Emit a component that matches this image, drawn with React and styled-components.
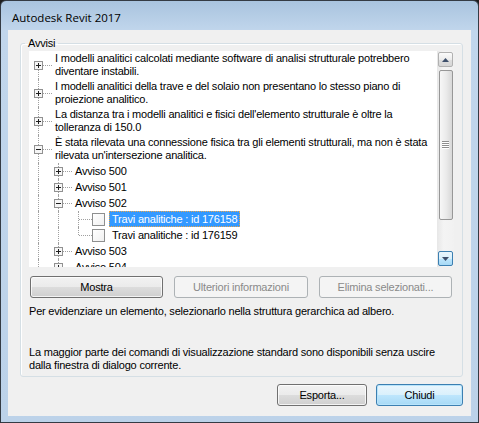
import styled, { createGlobalStyle } from "styled-components";

const GlobalStyle = createGlobalStyle`
  html, body {
    margin: 0;
    padding: 0;
    background: #1e1e1e;
  }
  body {
    font-family: "Liberation Sans", Arial, sans-serif;
    font-size: 11px;
    letter-spacing: -0.2px;
    color: #000;
  }
`;

const items = [
    { level: 0, lines: ["I modelli analitici calcolati mediante software di analisi strutturale potrebbero", "diventare instabili."], state: "closed", first: true, more: true, guides: [] },
    { level: 0, lines: ["I modelli analitici della trave e del solaio non presentano lo stesso piano di", "proiezione analitico."], state: "closed", more: true, guides: [] },
    { level: 0, lines: ["La distanza tra i modelli analitici e fisici dell'elemento strutturale è oltre la", "tolleranza di 150.0"], state: "closed", more: true, guides: [] },
    { level: 0, lines: ["È stata rilevata una connessione fisica tra gli elementi strutturali, ma non è stata", "rilevata un'intersezione analitica."], state: "open", more: true, guides: [] },
    { level: 1, lines: ["Avviso 500"], state: "closed", more: true, guides: [true] },
    { level: 1, lines: ["Avviso 501"], state: "closed", more: true, guides: [true] },
    { level: 1, lines: ["Avviso 502"], state: "open", more: true, guides: [true] },
    { level: 2, lines: ["Travi analitiche : id 176158"], check: true, selected: true, more: true, guides: [true, true] },
    { level: 2, lines: ["Travi analitiche : id 176159"], check: true, more: false, guides: [true, true] },
    { level: 1, lines: ["Avviso 503"], state: "closed", more: true, guides: [true] },
    { level: 1, lines: ["Avviso 504"], state: "closed", more: true, guides: [true] },
];

const Expander = ({ open }) => (
    <svg width="9" height="9" viewBox="0 0 9 9">
        <rect x="0.5" y="0.5" width="8" height="8" fill="#f6f6f6" stroke="#919191" />
        <path d="M2 4.5h5" stroke="#1f1f1f" />
        {!open && <path d="M4.5 2v5" stroke="#1f1f1f" />}
    </svg>
);

const Arrow = ({ down }) => (
    <svg width="7" height="4" viewBox="0 0 7 4">
        <path d={down ? "M0 0h7L3.5 4z" : "M0 4h7L3.5 0z"} fill="#3d4f6b" />
    </svg>
);

const Grip = () => (
    <svg width="7" height="8" viewBox="0 0 7 8">
        {[0, 2, 4, 6].map((y) => (
            <g key={y}>
                <path d={`M0 ${y + 0.5}h7`} stroke="#8d8d8d" />
                <path d={`M0 ${y + 1.5}h7`} stroke="#ffffff" />
            </g>
        ))}
    </svg>
);

const App = () => {
    return (
        <>
            <GlobalStyle />
            <Window>
                <TitleBar>Autodesk Revit 2017</TitleBar>
                <Client>
                    <GroupBox>
                        <Legend>Avvisi</Legend>
                        <TreeFrame>
                            <TreeBody>
                                {items.map((it, i) => (
                                    <Row key={i}>
                                        {it.guides.map((g, j) => (
                                            <Guide key={j} $line={g} />
                                        ))}
                                        <Connector $first={it.first} $last={!it.more} $leaf={!it.state}>
                                            {it.state && (
                                                <BoxSlot>
                                                    <Expander open={it.state === "open"} />
                                                </BoxSlot>
                                            )}
                                        </Connector>
                                        {it.check && <CheckBox />}
                                        <Label $selected={it.selected} $wrap={it.lines.length > 1}>
                                            {it.lines.map((l, k) => (
                                                <span key={k}>
                                                    {k > 0 && <br />}
                                                    {l}
                                                </span>
                                            ))}
                                        </Label>
                                    </Row>
                                ))}
                            </TreeBody>
                            <ScrollBar>
                                <ScrollButton>
                                    <Arrow />
                                </ScrollButton>
                                <Thumb>
                                    <Grip />
                                </Thumb>
                                <ScrollButton $hover>
                                    <Arrow down />
                                </ScrollButton>
                            </ScrollBar>
                        </TreeFrame>
                        <ActionRow>
                            <Button $w={133}>Mostra</Button>
                            <Button $w={134} disabled>Ulteriori informazioni</Button>
                            <Button $w={133} disabled>Elimina selezionati...</Button>
                        </ActionRow>
                        <Hint>Per evidenziare un elemento, selezionarlo nella struttura gerarchica ad albero.</Hint>
                        <Info>
                            La maggior parte dei comandi di visualizzazione standard sono disponibili senza uscire
                            <br />
                            dalla finestra di dialogo corrente.
                        </Info>
                    </GroupBox>
                    <Footer>
                        <Button $w={90}>Esporta...</Button>
                        <DefaultButton $w={87}>Chiudi</DefaultButton>
                    </Footer>
                </Client>
            </Window>
        </>
    );
};

const Window = styled.div`
    width: 479px;
    height: 423px;
    box-sizing: border-box;
    border: 1px solid #343b44;
    border-radius: 6px 6px 0 0;
    background: linear-gradient(to bottom, #a9c4df 0px, #c1d6ec 30px, #bcd2e9 100%);
    display: flex;
    flex-direction: column;
    padding: 0 7px 6px;
`;

const TitleBar = styled.div`
    height: 29px;
    box-sizing: border-box;
    padding: 4px 0 0 4px;
    display: flex;
    align-items: center;
    font-family: "Segoe UI", "Open Sans", sans-serif;
    font-size: 11.5px;
    letter-spacing: 0;
    color: #000;
`;

const Client = styled.div`
    flex: 1;
    display: flex;
    flex-direction: column;
    background: #f0f0f0;
    padding: 7px 8px 10px 12px;
    min-height: 0;
`;

const GroupBox = styled.fieldset`
    flex: 1;
    margin: 0;
    padding: 1px 8px 0 8px;
    border: 1px solid #d5dfe5;
    border-radius: 3px;
    box-shadow: inset 1px 1px 0 #ffffff;
    min-width: 0;
`;

const Legend = styled.legend`
    margin-left: -4px;
    padding: 0 3px;
    line-height: 13px;
`;

const TreeFrame = styled.div`
    display: flex;
    height: 216px;
`;

const TreeBody = styled.div`
    flex: 1;
    background: #ffffff;
    overflow: hidden;
`;

const Row = styled.div`
    display: flex;
    align-items: stretch;
    min-height: 16px;
`;

const Guide = styled.div`
    width: 20px;
    flex: none;
    position: relative;
    &::before {
        content: "";
        display: ${(p) => (p.$line ? "block" : "none")};
        position: absolute;
        left: 9px;
        top: 0;
        bottom: 0;
        border-left: 1px dotted #a0a0a0;
    }
`;

const Connector = styled.div`
    width: 23px;
    flex: none;
    position: relative;
    &::before {
        content: "";
        position: absolute;
        left: 9px;
        top: ${(p) => (p.$first ? "50%" : "0")};
        bottom: ${(p) => (p.$last ? "50%" : "0")};
        border-left: 1px dotted #a0a0a0;
    }
    &::after {
        content: "";
        position: absolute;
        left: ${(p) => (p.$leaf ? "10px" : "14px")};
        right: 0;
        top: 50%;
        border-top: 1px dotted #a0a0a0;
    }
`;

const BoxSlot = styled.span`
    position: absolute;
    left: 5px;
    top: calc(50% - 4px);
    width: 9px;
    height: 9px;
    display: block;
    line-height: 0;
`;

const CheckBox = styled.span`
    align-self: center;
    width: 11px;
    height: 11px;
    flex: none;
    border: 1px solid #8e8f8f;
    background: linear-gradient(135deg, #ffffff 0%, #f0f0f0 100%);
    margin-right: 4px;
`;

const Label = styled.div`
    align-self: center;
    white-space: nowrap;
    padding: 0 2px;
    border: 1px ${(p) => (p.$selected ? "dotted #e8a44a" : "solid transparent")};
    line-height: ${(p) => (p.$wrap ? "13px" : "14px")};
    background: ${(p) => (p.$selected ? "#3399ff" : "transparent")};
    color: ${(p) => (p.$selected ? "#ffffff" : "#000000")};
`;

const ScrollBar = styled.div`
    width: 17px;
    flex: none;
    box-sizing: border-box;
    display: flex;
    flex-direction: column;
    align-items: center;
    padding: 1px 0 1px;
    background: linear-gradient(to right, #e7e7e7, #f4f4f4 40%, #f1f1f1);
`;

const ScrollButton = styled.div`
    width: 15px;
    height: 15px;
    box-sizing: border-box;
    display: flex;
    align-items: center;
    justify-content: center;
    border-radius: 2px;
    border: 1px solid ${(p) => (p.$hover ? "#3c7fb1" : "#b1b1b1")};
    background: ${(p) =>
        p.$hover
            ? "linear-gradient(to bottom, #eaf6fd 0%, #d9f0fc 50%, #bee6fd 50%, #a7d9f5 100%)"
            : "linear-gradient(to bottom, #fbfbfb 0%, #ececec 50%, #dfdfdf 50%, #d6d6d6 100%)"};
    margin-top: ${(p) => (p.$hover ? "auto" : "0")};
`;

const Thumb = styled.div`
    width: 14px;
    height: 150px;
    box-sizing: border-box;
    margin-top: 3px;
    border: 1px solid #979797;
    border-radius: 2px;
    background: linear-gradient(to right, #f7f7f7 0%, #ebebeb 50%, #d8d8d8 100%);
    display: flex;
    align-items: center;
    justify-content: center;
`;

const ActionRow = styled.div`
    display: flex;
    gap: 11px;
    margin: 9px 0 0 1px;
`;

const Button = styled.button`
    box-sizing: border-box;
    width: ${(p) => p.$w}px;
    height: 22px;
    padding: 0;
    font-family: "Liberation Sans", Arial, sans-serif;
    font-size: 11px;
    letter-spacing: -0.2px;
    color: #000;
    border: 1px solid #707070;
    border-radius: 3px;
    background: linear-gradient(to bottom, #f2f2f2 0%, #ebebeb 50%, #dddddd 50%, #cfcfcf 100%);
    box-shadow: inset 0 0 0 1px rgba(255, 255, 255, 0.75);

    &:disabled {
        color: #8a8a8a;
        border-color: #adb2b5;
        background: #f4f4f4;
        box-shadow: none;
    }
`;

const DefaultButton = styled(Button)`
    border-color: #3c7fb1;
    background: linear-gradient(to bottom, #eaf6fd 0%, #d9f0fc 50%, #bee6fd 50%, #a7d9f5 100%);
    box-shadow: inset 0 0 0 1px #b8e4fb;
`;

const Hint = styled.div`
    margin-top: 7px;
    line-height: 13px;
`;

const Info = styled.div`
    margin-top: 28px;
    line-height: 13px;
`;

const Footer = styled.div`
    display: flex;
    justify-content: flex-end;
    gap: 9px;
    margin-top: 7px;
`;

export default App
